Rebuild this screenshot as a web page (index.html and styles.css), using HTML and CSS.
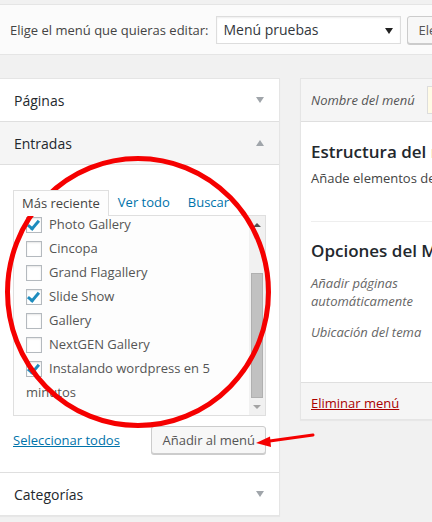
FILE: index.html
```html
<!DOCTYPE html>
<html lang="es">
<head>
    <meta charset="UTF-8">
    <meta name="viewport" content="width=device-width, initial-scale=1.0">
    <title>Menús</title>
    <link rel="stylesheet" href="styles.css">
</head>
<body>
    <!-- barra para elegir el menú -->
    <div class="manage-menus">
        <span class="select-label">Elige el menú que quieras editar:</span>
        <div class="menu-select">Menú pruebas<span class="caret"></span></div>
        <button type="button" class="btn">Elegir</button>
    </div>

    <div class="columns">
        <!-- columna izquierda: acordeón -->
        <div class="accordion">
            <div class="section">
                <h3 class="section-title">Páginas <span class="arrow"></span></h3>
            </div>
            <div class="section open">
                <h3 class="section-title">Entradas <span class="arrow up"></span></h3>
                <div class="inside">
                    <ul class="tabs">
                        <li class="tab active">Más reciente</li>
                        <li class="tab">Ver todo</li>
                        <li class="tab">Buscar</li>
                    </ul>
                    <div class="list-box">
                        <ul class="checklist">
                            <li><span class="cb on"></span>Photo Gallery</li>
                            <li><span class="cb"></span>Cincopa</li>
                            <li><span class="cb"></span>Grand Flagallery</li>
                            <li><span class="cb on"></span>Slide Show</li>
                            <li><span class="cb"></span>Gallery</li>
                            <li><span class="cb"></span>NextGEN Gallery</li>
                            <li><span class="cb on"></span>Instalando wordpress en 5 minutos</li>
                        </ul>
                        <div class="scrollbar">
                            <span class="sb-up"></span>
                            <span class="sb-thumb"></span>
                            <span class="sb-down"></span>
                        </div>
                    </div>
                    <div class="actions">
                        <a href="#" class="select-all">Seleccionar todos</a>
                        <button type="button" class="btn">Añadir al menú</button>
                    </div>
                </div>
            </div>
            <div class="section">
                <h3 class="section-title">Categorías <span class="arrow"></span></h3>
            </div>
        </div>

        <!-- columna derecha: edición del menú -->
        <div class="menu-edit">
            <div class="menu-header">
                <span class="name-label">Nombre del menú</span>
                <span class="name-input"></span>
            </div>
            <div class="menu-body">
                <h3 class="menu-title">Estructura del menú</h3>
                <p class="menu-desc">Añade elementos del menú desde la columna de la izquierda.</p>
                <div class="menu-settings">
                    <h3 class="menu-title">Opciones del Menú</h3>
                    <p class="opt">Añadir páginas automáticamente</p>
                    <p class="opt">Ubicación del tema</p>
                </div>
            </div>
            <div class="menu-footer">
                <a href="#" class="delete">Eliminar menú</a>
            </div>
        </div>
    </div>

    <!-- marcas en rojo -->
    <svg class="marks" width="432" height="522" viewBox="0 0 432 522">
        <ellipse cx="138" cy="292" rx="130.5" ry="133.5" fill="none" stroke="#f50000" stroke-width="5"/>
        <line x1="313" y1="435" x2="266" y2="441.5" stroke="#f50000" stroke-width="3" stroke-linecap="round"/>
        <polygon points="256,443 270,436.5 271,447" fill="#f50000"/>
    </svg>
</body>
</html>
```

FILE: styles.css
```css
/* base */
body {
    margin: 0;
    background: #f1f1f1;
    font-family: "Open Sans", sans-serif;
    font-size: 13px;
    color: #444;
    width: 432px;
    height: 522px;
    overflow: hidden;
    position: relative;
}

ul {
    list-style: none;
    margin: 0;
    padding: 0;
}

a {
    color: #0073aa;
}

.btn {
    font-family: "Open Sans", sans-serif;
    font-size: 13px;
    color: #555;
    background: #f7f7f7;
    border: 1px solid #ccc;
    border-radius: 3px;
    box-shadow: 0 1px 0 #ccc;
    height: 28px;
    padding: 0 10px;
    white-space: nowrap;
}

/* barra superior */
.manage-menus {
    margin-top: 4px;
    height: 49px;
    background: #fbfbfb;
    border-top: 1px solid #e5e5e5;
    border-bottom: 1px solid #e5e5e5;
    display: flex;
    align-items: center;
    padding-left: 10px;
    white-space: nowrap;
}

.select-label {
    margin-right: 8px;
}

.menu-select {
    width: 177px;
    height: 26px;
    line-height: 26px;
    padding-left: 6px;
    border: 1px solid #ddd;
    background: #fff;
    box-shadow: inset 0 1px 2px rgba(0, 0, 0, 0.07);
    font-size: 14px;
    color: #32373c;
    position: relative;
    flex-shrink: 0;
}

.caret {
    position: absolute;
    right: 7px;
    top: 11px;
    border-left: 4px solid transparent;
    border-right: 4px solid transparent;
    border-top: 6px solid #222;
}

.manage-menus .btn {
    margin-left: 6px;
    flex-shrink: 0;
}

/* columnas */
.columns {
    display: flex;
    gap: 20px;
    margin-top: 23px;
    align-items: flex-start;
}

.accordion {
    width: 279px;
    flex-shrink: 0;
    background: #fff;
    border: 1px solid #e5e5e5;
    border-left: none;
    box-shadow: 0 1px 1px rgba(0, 0, 0, 0.04);
}

.section {
    border-bottom: 1px solid #dfdfdf;
}

.section:last-child {
    border-bottom: none;
}

.section-title {
    margin: 0;
    height: 42px;
    padding: 0 15px 0 14px;
    display: flex;
    align-items: center;
    justify-content: space-between;
    font-size: 14px;
    font-weight: 400;
    color: #23282d;
}

.open .section-title {
    background: #f5f5f5;
    border-bottom: 1px solid #dfdfdf;
}

.arrow {
    border-left: 4px solid transparent;
    border-right: 4px solid transparent;
    border-top: 6px solid #a0a5aa;
}

.arrow.up {
    border-top: none;
    border-bottom: 6px solid #a0a5aa;
}

.inside {
    padding: 25px 13px 18px 13px;
}

/* pestañas */
.tabs {
    display: flex;
    height: 25px;
}

.tab {
    padding: 0 9px;
    line-height: 25px;
    color: #0073aa;
}

.tab.active {
    color: #444;
    background: #fdfdfd;
    border: 1px solid #dfdfdf;
    border-bottom: none;
    padding: 0 8px;
    margin-bottom: -1px;
    z-index: 1;
}

.list-box {
    height: 199px;
    border: 1px solid #dfdfdf;
    background: #fdfdfd;
    display: flex;
    overflow: hidden;
}

.checklist {
    flex: 1;
    margin-top: -4px;
    padding-left: 12px;
    padding-right: 8px;
}

.checklist li {
    line-height: 24px;
    color: #555;
}

.cb {
    display: inline-block;
    width: 14px;
    height: 14px;
    border: 1px solid #b4b9be;
    background: #fff;
    box-shadow: inset 0 1px 2px rgba(0, 0, 0, 0.1);
    vertical-align: -4px;
    margin-right: 7px;
    position: relative;
}

.cb.on::after {
    content: "";
    position: absolute;
    left: 3px;
    top: 0;
    width: 4px;
    height: 9px;
    border-right: 3px solid #1e8cbe;
    border-bottom: 3px solid #1e8cbe;
    transform: rotate(40deg);
}

.scrollbar {
    width: 16px;
    background: #f1f1f1;
    display: flex;
    flex-direction: column;
    align-items: center;
}

.sb-up,
.sb-down {
    height: 17px;
    width: 16px;
    position: relative;
}

.sb-up::after,
.sb-down::after {
    content: "";
    position: absolute;
    left: 4px;
    top: 7px;
    border-left: 4px solid transparent;
    border-right: 4px solid transparent;
}

.sb-up::after {
    border-bottom: 4px solid #505050;
}

.sb-down::after {
    border-top: 4px solid #a3a3a3;
}

.sb-thumb {
    margin-top: auto;
    width: 12px;
    height: 125px;
    background: #c1c1c1;
    border: 1px solid #b0b0b0;
    box-sizing: border-box;
}

.actions {
    display: flex;
    justify-content: space-between;
    align-items: center;
    margin-top: 10px;
}

/* columna derecha */
.menu-edit {
    width: 400px;
    flex-shrink: 0;
    background: #fff;
    border: 1px solid #e5e5e5;
    box-shadow: 0 1px 1px rgba(0, 0, 0, 0.04);
}

.menu-header {
    height: 42px;
    background: #f5f5f5;
    border-bottom: 1px solid #dfdfdf;
    display: flex;
    align-items: center;
    padding-left: 10px;
    white-space: nowrap;
}

.name-label {
    font-style: italic;
    color: #555;
    margin-right: 12px;
}

.name-input {
    width: 200px;
    height: 26px;
    border: 1px solid #ddd;
    background: #fffbe6;
}

.menu-body {
    padding: 0 10px;
    white-space: nowrap;
}

.menu-title {
    margin: 0;
    padding-top: 18px;
    font-size: 17px;
    font-weight: 600;
    color: #23282d;
}

.menu-desc {
    margin: 6px 0 0;
}

.menu-settings {
    margin-top: 34px;
    border-top: 1px solid #eee;
    padding-bottom: 41px;
}

.menu-settings .menu-title {
    padding-top: 17px;
    margin-bottom: 12px;
}

.opt {
    margin: 0;
    font-style: italic;
    color: #666;
    white-space: normal;
    width: 120px;
    line-height: 18px;
}

.opt + .opt {
    margin-top: 13px;
}

.menu-footer {
    background: #f5f5f5;
    border-top: 1px solid #dfdfdf;
    height: 36px;
    padding-left: 10px;
    line-height: 40px;
}

.delete {
    color: #a00;
}

/* marcas */
.marks {
    position: absolute;
    left: 0;
    top: 0;
    pointer-events: none;
}
```
